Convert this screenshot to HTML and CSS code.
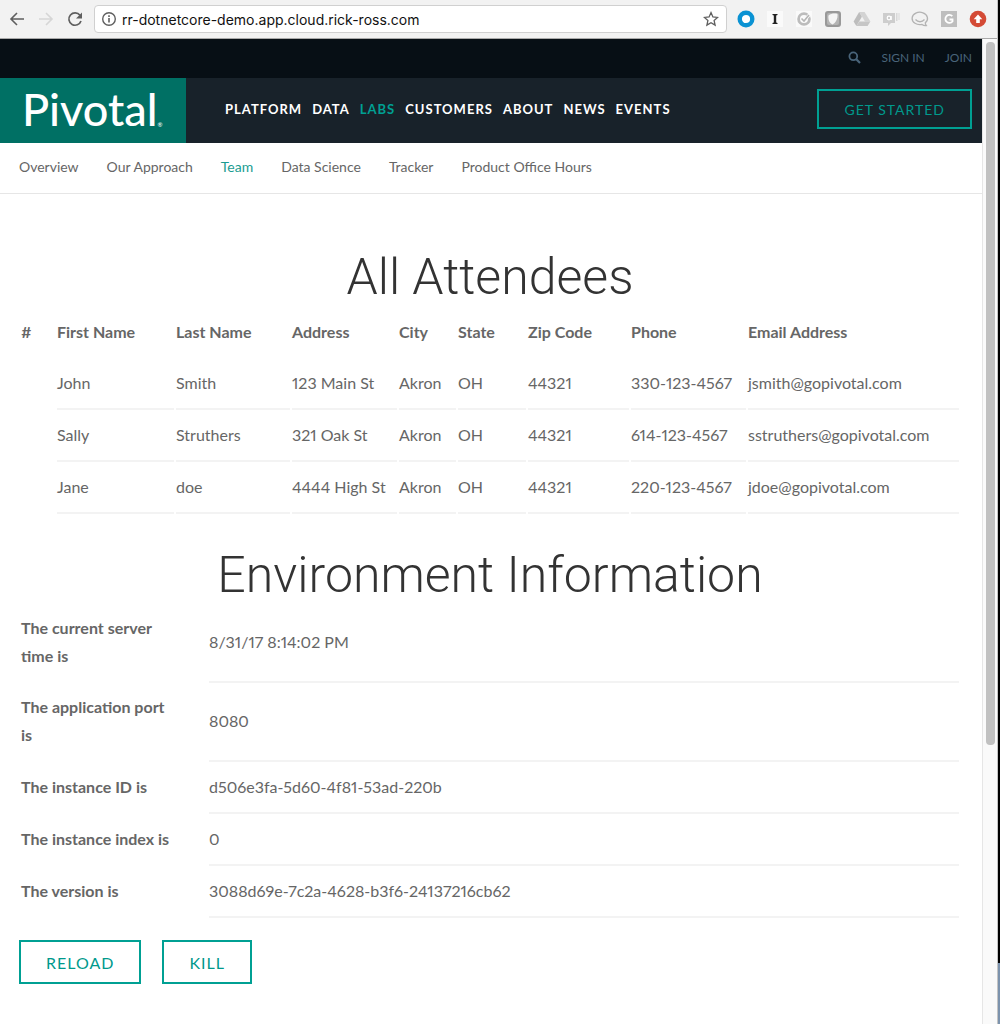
FILE: index.html
```html
<!DOCTYPE html>
<html lang="en">
<head>
<meta charset="utf-8">
<meta name="viewport" content="width=device-width, initial-scale=1">
<title>All Attendees</title>
<link rel="stylesheet" href="styles.css">
</head>
<body>
<div class="desktop">
  <div class="window">
    <div class="toolbar">
      <div class="history">
        <button type="button" class="tool" aria-label="Back"><svg width="16" height="16" viewBox="0 0 16 16"><path d="M15 8H2.500M8 2L2 8l6 6" fill="none" stroke="#5f5f5f" stroke-width="1.600"/></svg></button>
        <button type="button" class="tool" aria-label="Forward" disabled><svg width="16" height="16" viewBox="0 0 16 16"><path d="M1 8h12.500M8 2l6 6-6 6" fill="none" stroke="#d6d6d6" stroke-width="1.600"/></svg></button>
        <button type="button" class="tool" aria-label="Reload page"><svg width="16" height="16" viewBox="0 0 16 16"><path d="M13 4.200A6.200 6.200 0 1 0 14 10" fill="none" stroke="#5f5f5f" stroke-width="1.700"/><path d="M15 1.500v6H9z" fill="#5f5f5f"/></svg></button>
      </div>
      <div class="address">
        <svg width="16" height="16" viewBox="0 0 16 16"><circle cx="8" cy="8" r="6.300" fill="none" stroke="#5f5f5f" stroke-width="1.400"/><path d="M8 7v4.500M8 4.300v1.600" stroke="#5f5f5f" stroke-width="1.600"/></svg>
        <input class="url" type="text" aria-label="Address" value="rr-dotnetcore-demo.app.cloud.rick-ross.com">
        <button type="button" class="tool" aria-label="Bookmark"><svg width="16" height="16" viewBox="0 0 16 16"><path d="M8 1.600l1.900 4.300 4.700.5-3.500 3.100 1 4.600L8 11.700l-4.100 2.400 1-4.600L1.400 6.400l4.700-.5z" fill="none" stroke="#5f5f5f" stroke-width="1.300"/></svg></button>
      </div>
      <div class="extensions">
        <button type="button" class="tool" aria-label="Ring"><svg width="18" height="18" viewBox="0 0 18 18"><circle cx="9" cy="9" r="6.300" fill="#fff" stroke="#0a92d3" stroke-width="4.400"/></svg></button>
        <button type="button" class="tool" aria-label="Reader"><svg width="18" height="18" viewBox="0 0 18 18"><rect x="1" y="1" width="16" height="16" fill="#fafafa"/><path d="M6.500 4h5v1l-1.300.4v7.200l1.300.4v1h-5v-1l1.300-.4V5.400L6.500 5z" fill="#222"/></svg></button>
        <button type="button" class="tool" aria-label="Check"><svg width="18" height="18" viewBox="0 0 18 18"><rect x="1" y="1" width="16" height="16" fill="#fafafa"/><circle cx="9" cy="9" r="5.400" fill="none" stroke="#bcbcbc" stroke-width="2.800"/><path d="M6.500 8.500L9 11l6-7" fill="none" stroke="#fafafa" stroke-width="3"/><path d="M6.500 8.500L9 11l5-6" fill="none" stroke="#b5b5b5" stroke-width="1.600"/></svg></button>
        <button type="button" class="tool" aria-label="Shield"><svg width="18" height="18" viewBox="0 0 18 18"><rect x="1" y="1" width="16" height="16" rx="3" fill="#999"/><rect x="3" y="3" width="12" height="12" rx="2" fill="#b4b4b4"/><path d="M4.500 5.500C7 3.500 11 3 13.500 4c.5 5-2 9-5 10.500C5 13 4 9 4.500 5.500z" fill="#f5f5f5"/></svg></button>
        <button type="button" class="tool" aria-label="Drive"><svg width="18" height="18" viewBox="0 0 18 18"><path d="M6.200 2h5.400l5.800 9.500H12z" fill="#d3d3d3"/><path d="M6.200 2L.6 11.500 3.400 16l5.500-9.300z" fill="#bdbdbd"/><path d="M6.200 11.500h11.200L14.600 16H3.400z" fill="#c6c6c6"/></svg></button>
        <button type="button" class="tool" aria-label="Chat"><svg width="18" height="18" viewBox="0 0 18 18"><path d="M1 3h12v10H9l-3 3v-3H1z" fill="#cdcdcd"/><path d="M14 3h1.500v8H14zM16.500 3h1v7h-1z" fill="#d8d8d8"/><circle cx="7" cy="8" r="1.800" fill="none" stroke="#fff" stroke-width="1.200"/><path d="M9.200 6v4" stroke="#fff" stroke-width="1.200"/></svg></button>
        <button type="button" class="tool" aria-label="Messages"><svg width="18" height="18" viewBox="0 0 18 18"><path d="M14.300 12.800A7.700 6.200 0 1 0 11 14.400c1.200 1 2.800 1.500 4.300 1.200-.6-.7-1-1.700-1-2.800zM4.500 9.500c2.500 3 6.500 3 9 0" fill="none" stroke="#b3b3b3" stroke-width="1.300"/></svg></button>
        <button type="button" class="tool" aria-label="G"><svg width="18" height="18" viewBox="0 0 18 18"><rect x="1" y="1" width="16" height="16" fill="#bebebe"/><path d="M12.300 6.200A4 4 0 1 0 12.500 11.500V9.500H9.500" fill="none" stroke="#fff" stroke-width="1.800"/></svg></button>
        <button type="button" class="tool" aria-label="Update"><svg width="18" height="18" viewBox="0 0 18 18"><circle cx="9" cy="9" r="8.300" fill="#d44a35"/><path d="M9 4.500l4.300 4.700h-2.500V13H7.200V9.200H4.700z" fill="#fff"/></svg></button>
      </div>
    </div>
    <div class="viewport">
      <div class="page">
        <header>
          <div class="account">
            <a href="#search" aria-label="Search"><svg class="search" width="13" height="13" viewBox="0 0 13 13"><circle cx="5.300" cy="5.300" r="3.900" fill="none" stroke="#49647a" stroke-width="1.800"/><path d="M8.300 8.300l3.700 3.700" stroke="#49647a" stroke-width="2.200"/></svg></a>
            <a href="#signin">SIGN IN</a>
            <a href="#join">JOIN</a>
          </div>
          <div class="masthead">
            <a class="logo" href="#home">Pivotal<span class="reg">®</span></a>
            <nav class="main-nav">
              <a href="#platform">PLATFORM</a>
              <a href="#data">DATA</a>
              <a class="current" href="#labs">LABS</a>
              <a href="#customers">CUSTOMERS</a>
              <a href="#about">ABOUT</a>
              <a href="#news">NEWS</a>
              <a href="#events">EVENTS</a>
            </nav>
            <button type="button" class="button start">GET STARTED</button>
          </div>
          <nav class="sub-nav">
            <a href="#overview">Overview</a>
            <a href="#approach">Our Approach</a>
            <a class="current" href="#team">Team</a>
            <a href="#science">Data Science</a>
            <a href="#tracker">Tracker</a>
            <a href="#hours">Product Office Hours</a>
          </nav>
        </header>
        <main>
          <h1>All Attendees</h1>
          <table class="attendees">
            <colgroup><col class="c-num"><col class="c-first"><col class="c-last"><col class="c-street"><col class="c-city"><col class="c-state"><col class="c-zip"><col class="c-phone"><col></colgroup>
            <thead>
              <tr><th>#</th><th>First Name</th><th>Last Name</th><th>Address</th><th>City</th><th>State</th><th>Zip Code</th><th>Phone</th><th>Email Address</th></tr>
            </thead>
            <tbody>
              <tr><th></th><td>John</td><td>Smith</td><td>123 Main St</td><td>Akron</td><td>OH</td><td>44321</td><td>330-123-4567</td><td>jsmith@gopivotal.com</td></tr>
              <tr><th></th><td>Sally</td><td>Struthers</td><td>321 Oak St</td><td>Akron</td><td>OH</td><td>44321</td><td>614-123-4567</td><td>sstruthers@gopivotal.com</td></tr>
              <tr><th></th><td>Jane</td><td>doe</td><td>4444 High St</td><td>Akron</td><td>OH</td><td>44321</td><td>220-123-4567</td><td>jdoe@gopivotal.com</td></tr>
            </tbody>
          </table>
          <h1>Environment Information</h1>
          <table class="environment">
            <colgroup><col class="c-label"><col></colgroup>
            <tbody>
              <tr><th scope="row">The current server time is</th><td>8/31/17 8:14:02 PM</td></tr>
              <tr><th scope="row">The application port is</th><td>8080</td></tr>
              <tr><th scope="row">The instance ID is</th><td>d506e3fa-5d60-4f81-53ad-220b</td></tr>
              <tr><th scope="row">The instance index is</th><td>0</td></tr>
              <tr><th scope="row">The version is</th><td>3088d69e-7c2a-4628-b3f6-24137216cb62</td></tr>
            </tbody>
          </table>
          <div class="actions">
            <button type="button" class="button">RELOAD</button>
            <button type="button" class="button">KILL</button>
          </div>
        </main>
      </div>
      <div class="scrollbar"><div class="thumb"></div></div>
    </div>
  </div>
  <div class="behind"></div>
</div>
</body>
</html>
```
FILE: styles.css
```css
* { box-sizing: border-box; }

body {
  margin: 0;
  font-family: Lato, "Liberation Sans", sans-serif;
  font-size: 16px;
  font-variant-numeric: proportional-nums;
  line-height: 28px;
  color: #666;
  background: #fff;
}

a { color: inherit; text-decoration: none; }
button { font-family: inherit; cursor: pointer; }
svg { display: block; }

.desktop { display: flex; min-height: 100vh; }
.window { flex: 1; display: flex; flex-direction: column; border-right: 1px solid #c4c4c4; }
.behind {
  width: 2px;
  background: linear-gradient(#000 94%, #7c93ad 94%);
}

/* Browser toolbar */
.toolbar {
  display: flex;
  align-items: center;
  height: 39px;
  padding: 0 10px 0 9px;
  background: #f2f2f2;
  border-bottom: 1px solid #a9a9a9;
}
.tool { display: block; padding: 0; border: 0; background: none; }
.history { display: flex; gap: 13px; margin-right: 11px; }
.address {
  flex: 1;
  display: flex;
  align-items: center;
  height: 28px;
  padding: 0 7px 0 6px;
  background: #fff;
  border: 1px solid #d0d0d0;
  border-radius: 4px;
}
.url {
  flex: 1;
  min-width: 0;
  padding: 0 5px;
  border: 0;
  outline: 0;
  background: none;
  font-family: Inter, sans-serif;
  font-size: 14px;
  color: #111;
}
.extensions { display: flex; gap: 11px; margin-left: 10px; }

.viewport { flex: 1; display: flex; }
.page { flex: 1; min-width: 0; }
.scrollbar {
  width: 15px;
  padding: 3px 2px 0 3px;
  background: #fafafa;
  border-left: 1px solid #e6e6e6;
}
.thumb { height: 703px; border-radius: 4px; background: #c1c1c1; }

/* Site header */
.account {
  display: flex;
  justify-content: flex-end;
  align-items: center;
  gap: 20px;
  height: 39px;
  padding: 0 10px 2px 0;
  background: #070f15;
  color: #49647a;
  font-size: 12px;
}
.masthead {
  display: flex;
  align-items: stretch;
  height: 65px;
  padding-right: 10px;
  background: #18222a;
}
.logo {
  display: flex;
  align-items: center;
  width: 186px;
  padding: 0 0 4px 22px;
  background: #007064;
  color: #fff;
  font-size: 45px;
  font-weight: 500;
}
.reg { align-self: flex-end; font-size: 6px; }
.main-nav {
  display: flex;
  align-items: center;
  flex: 1;
  gap: 10px;
  padding: 0 0 4px 39px;
  color: #fff;
  font-size: 13px;
  font-weight: 700;
  letter-spacing: 1px;
}
.main-nav .current { color: #00a093; }
.sub-nav {
  display: flex;
  align-items: center;
  gap: 28px;
  height: 51px;
  padding: 0 19px 2px;
  border-bottom: 1px solid #e6e6e6;
  font-size: 14px;
}
.sub-nav .current { color: #1a9c91; }

.button {
  height: 44px;
  padding: 0 25px;
  border: 2px solid #00a093;
  background: none;
  color: #00998c;
  font-size: 16px;
  letter-spacing: 1px;
}
.start { height: 40px; margin-top: 11px; font-size: 14px; }

/* Content */
main { padding: 54px 21px 40px 19px; }
h1 {
  margin: 0;
  font-family: Roboto, sans-serif;
  font-size: 50px;
  font-weight: 300;
  line-height: 58px;
  color: #333;
  text-align: center;
}
table {
  width: 100%;
  table-layout: fixed;
  border-collapse: separate;
  border-spacing: 2px;
}
th, td {
  padding: 8px 0 11px;
  border-bottom: 2px solid transparent;
  text-align: left;
  vertical-align: middle;
}
th { font-weight: 700; }
td { height: 50px; border-color: #f3f3f3; }
thead th { padding: 10px 0; }
.attendees { margin-bottom: 30px; }
.c-num { width: 34px; }
.c-first { width: 117px; }
.c-last { width: 114px; }
.c-street { width: 105px; }
.c-city { width: 57px; }
.c-state { width: 68px; }
.c-zip { width: 101px; }
.c-phone { width: 115px; }
.c-label { width: 186px; }
.environment th { padding-right: 30px; }

.actions { display: flex; gap: 21px; margin-top: 20px; }
```
